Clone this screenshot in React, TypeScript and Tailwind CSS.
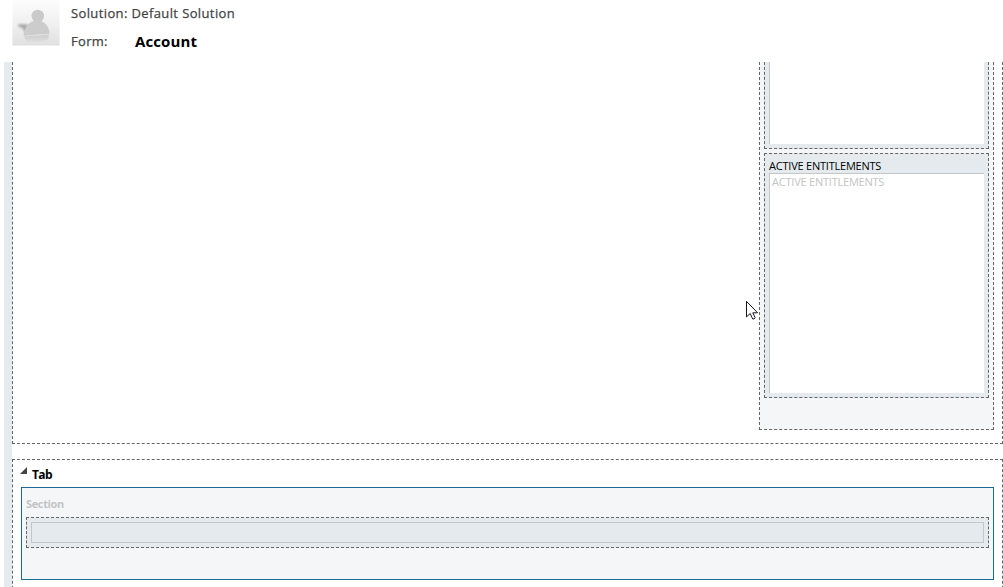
const sans = "font-['Open_Sans','Noto_Sans',sans-serif]";

function Avatar() {
  return (
    <svg width="48" height="46" viewBox="0 0 48 46" className="block shrink-0">
      <defs>
        <linearGradient id="bg" x1="0" y1="0" x2="0" y2="1">
          <stop offset="0" stopColor="#fdfdfd" />
          <stop offset="0.55" stopColor="#efefef" />
          <stop offset="1" stopColor="#e0e0e0" />
        </linearGradient>
        <linearGradient id="glow" x1="0" y1="0" x2="0" y2="1">
          <stop offset="0" stopColor="#cccccc" />
          <stop offset="1" stopColor="#e2e2e2" />
        </linearGradient>
        <filter id="soft" x="-30%" y="-30%" width="160%" height="160%">
          <feGaussianBlur stdDeviation="1" />
        </filter>
      </defs>
      <rect x="0.4" width="47.2" height="45.5" fill="url(#bg)" />
      <path d="M6 24.5 Q11 23.5 17 25 L13 34 Q13 28 6 26.5Z" fill="#aaa" filter="url(#soft)" />
      <path d="M12 36 L37 35 L36 39 Q25 46 14 41Z" fill="url(#glow)" />
      <circle cx="25.8" cy="16" r="6.3" fill="#cacaca" />
      <path d="M11.7 36 C12 28 17 20.5 25.3 20.5 C33 20.5 37.5 27 37.5 34 Q24 34.4 11.7 36Z" fill="#cccccc" />
      <path d="M11.7 36.2 Q24 34.6 37.5 34.3" fill="none" stroke="#dedede" strokeWidth="0.7" />
    </svg>
  );
}

function Pointer() {
  return (
    <svg width="13" height="20" viewBox="0 0 13 20" className="absolute left-[746px] top-[300px]">
      <path
        d="M0.5 1.3 V16.9 L4.2 13.5 L6.7 19 Q8.3 19.4 9.2 17.8 L6.8 12.8 H11.6 Z"
        fill="#fff"
        stroke="#141420"
        strokeWidth="1"
      />
    </svg>
  );
}

export default function App() {
  return (
    <div className={`relative flex h-[587px] w-[1003px] flex-col overflow-hidden bg-white ${sans}`}>
      <header className="flex h-[62px] shrink-0 pl-3">
        <Avatar />
        <div className="pl-[11px] pt-1 text-[13px] leading-[18px] text-[#444]">
          <div className="whitespace-nowrap tracking-[0.38px] [-webkit-text-stroke:0.25px_#444]">
            Solution: Default Solution
          </div>
          <div className="mt-[10px] flex">
            <span className="w-16 tracking-[0.3px] [-webkit-text-stroke:0.25px_#444]">Form:</span>
            <span className="text-[15px] font-bold tracking-[0.1px] text-black">Account</span>
          </div>
        </div>
      </header>

      <main className="flex min-h-0 grow pl-1">
        <div className="w-2 shrink-0 bg-[#e5eaee]" />
        <div className="flex grow flex-col">
          <section className="flex h-[382px] shrink-0 justify-end border border-t-0 border-dashed border-[#666] pr-2">
            <div className="h-[368px] w-[235px] border border-t-0 border-dashed border-[#666] bg-[#f5f6f8] px-1">
              <div className="h-[87px] border border-t-0 border-dashed border-[#666] bg-[#e5eaee] px-1">
                <div className="h-[82px] border-l border-[#c4c6c8] bg-white" />
              </div>
              <div className="mt-1 h-[245px] border border-dashed border-[#666] bg-[#e5eaee] px-1 text-[11px] leading-[15px] tracking-[-0.22px]">
                <div className="h-[19px] pt-1 text-black">ACTIVE ENTITLEMENTS</div>
                <div className="h-[220px] border-l border-t border-[#c4c6c8] bg-white pl-[2px] text-[#c4c4c4]">
                  ACTIVE ENTITLEMENTS
                </div>
              </div>
            </div>
          </section>

          <section className="mt-[15px] h-[140px] shrink-0 border border-b-0 border-dashed border-[#666] px-2">
            <div className="flex h-[27px]">
              <svg width="7" height="7" viewBox="0 0 7 7" className="-ml-px mt-[7px] block">
                <path d="M7 0V7H0Z" fill="#444" />
              </svg>
              <span className="pl-[5px] pt-[6px] text-[12px] font-bold leading-[17px] tracking-[-0.6px] text-black">
                Tab
              </span>
            </div>
            <div className="h-[93px] border border-[#1c6a94] bg-[#f5f6f8] px-1">
              <div className="h-[29px] pt-2 text-[11px] font-bold leading-[16px] tracking-[-0.35px] text-[#c4c4c4]">
                Section
              </div>
              <div className="h-[31px] border border-dashed border-[#666] bg-[#e5eaee] p-1">
                <div className="h-[21px] border border-[#c4c6c8]" />
              </div>
            </div>
          </section>
        </div>
      </main>
      <Pointer />
    </div>
  );
}
